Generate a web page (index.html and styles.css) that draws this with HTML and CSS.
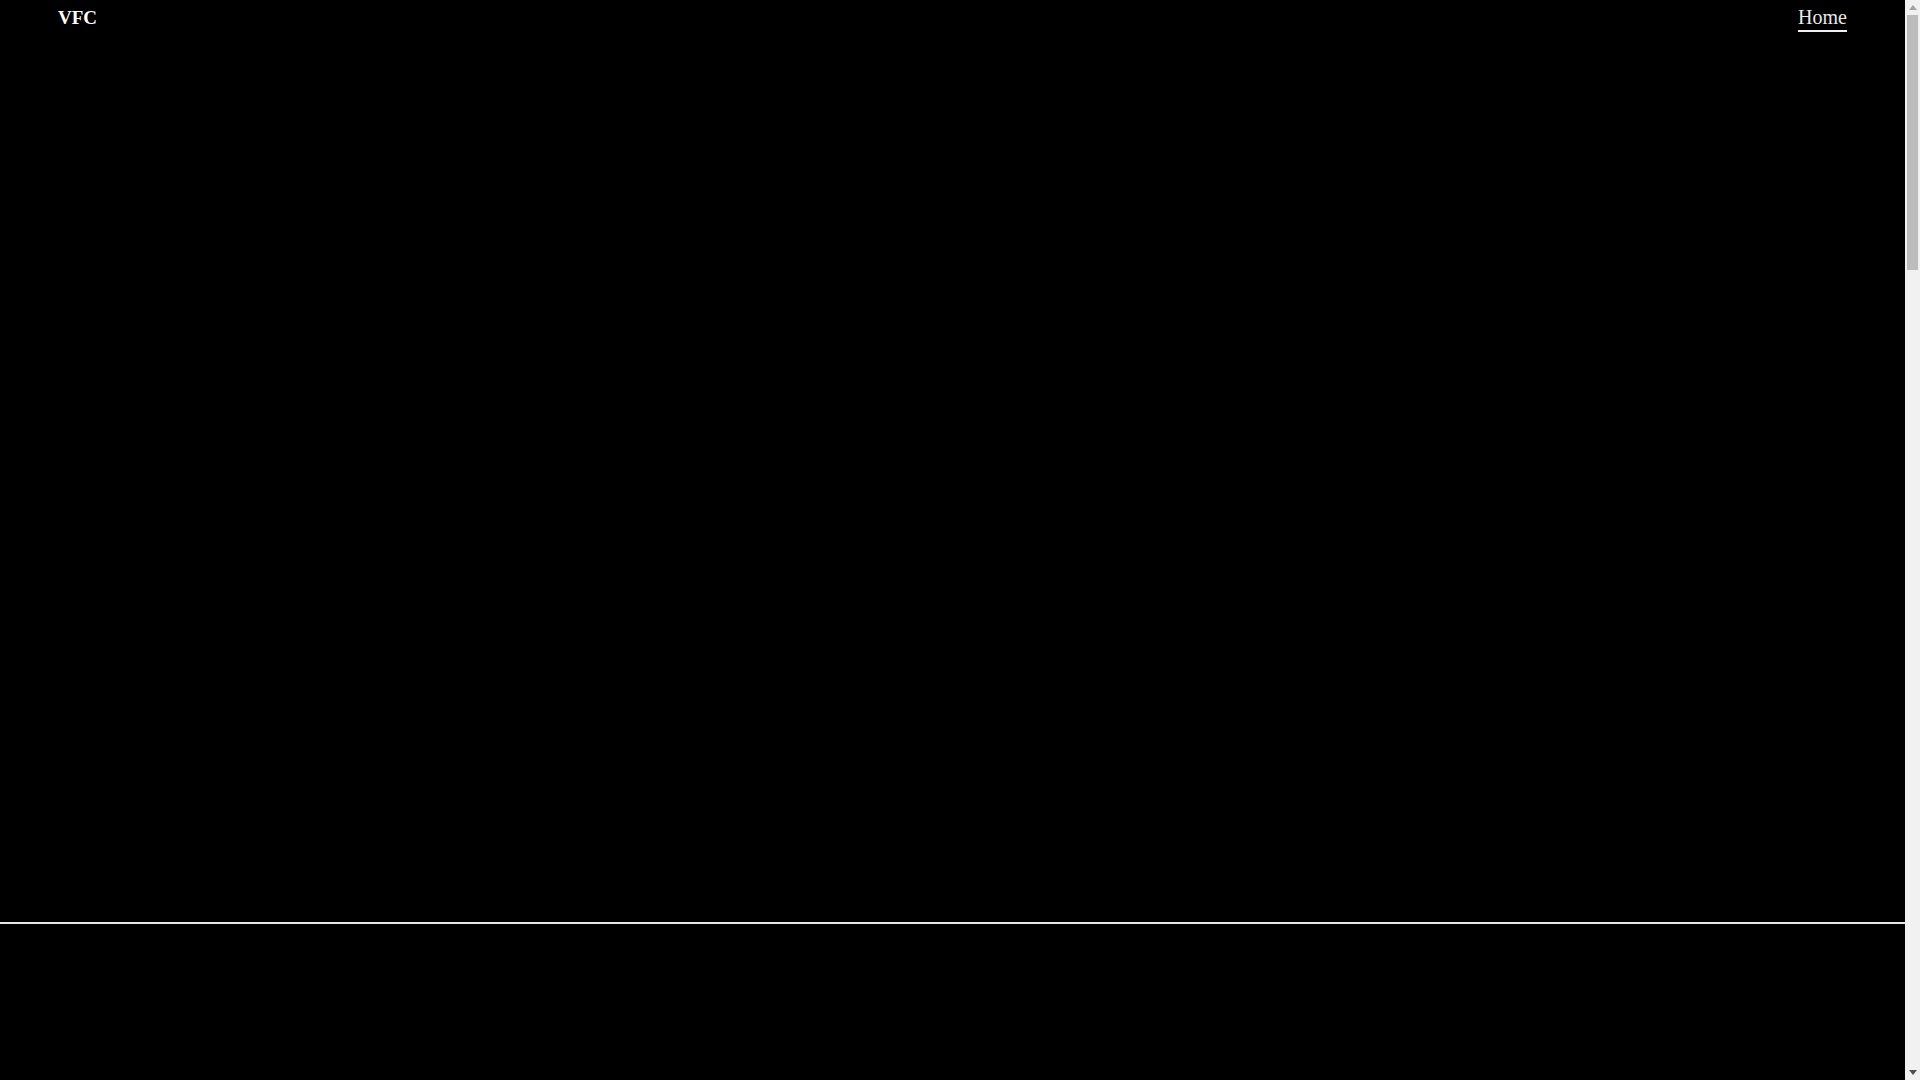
FILE: index.html
```html
<!DOCTYPE html>
<html lang="en">
<head>
<meta charset="utf-8">
<title>VFC</title>
<link rel="stylesheet" href="styles.css">
</head>
<body>
<div class="page">
  <header class="site-header">
    <a class="brand" href="#">VFC</a>
    <nav class="nav">
      <a class="nav-link active" href="#">Home</a>
    </nav>
  </header>
  <section class="hero"></section>
  <main class="content"></main>
</div>
<div class="scrollbar" aria-hidden="true">
  <div class="sb-btn">
    <svg width="8" height="5" viewBox="0 0 8 5"><polygon points="4,0 8,5 0,5" fill="#a3a3a3"/></svg>
  </div>
  <div class="sb-track"><div class="sb-thumb"></div></div>
  <div class="sb-btn">
    <svg width="8" height="5" viewBox="0 0 8 5"><polygon points="0,0 8,0 4,5" fill="#505050"/></svg>
  </div>
</div>
</body>
</html>
```

FILE: styles.css
```css
html, body {
  margin: 0;
  padding: 0;
  background: #000;
  color: #fff;
  font-family: "Liberation Serif", "Times New Roman", serif;
}
.page {
  position: relative;
  margin-right: 15px;
}
.site-header {
  position: absolute;
  top: 0;
  left: 0;
  right: 0;
  display: flex;
  justify-content: space-between;
  align-items: flex-start;
  padding: 6px 58px 0 58px;
  z-index: 2;
}
.brand {
  color: #fff;
  font-weight: bold;
  font-size: 19px;
  text-decoration: none;
  line-height: 23px;
}
.nav {
  display: flex;
}
.nav-link {
  color: #e8e8e8;
  font-size: 20px;
  line-height: 23px;
  text-decoration: none;
  padding-bottom: 1px;
  border-bottom: 2px solid #f0f0f0;
}
.hero {
  height: 922px;
  background: #000;
  border-bottom: 2px solid #e6e6e6;
}
.content {
  height: 3500px;
  background: #000;
}
.scrollbar {
  position: fixed;
  top: 0;
  right: 0;
  width: 15px;
  height: 100vh;
  background: #f1f1f1;
  display: flex;
  flex-direction: column;
  z-index: 10;
}
.sb-btn {
  height: 15px;
  display: flex;
  align-items: center;
  justify-content: center;
  flex: none;
}
.sb-track {
  flex: 1;
  padding: 0 2px;
}
.sb-thumb {
  height: 255px;
  background: #bcbcbc;
}
```
